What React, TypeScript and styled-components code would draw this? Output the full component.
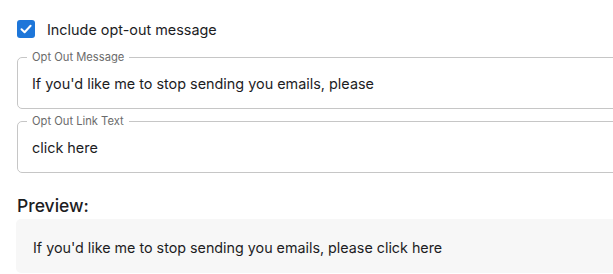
import React, { useState } from 'react';
import styled, { createGlobalStyle } from 'styled-components';

const GlobalStyle = createGlobalStyle`
    html, body {
        margin: 0;
        padding: 0;
        background: #fff;
        overflow: hidden;
    }
    body {
        font-family: Inter, "Helvetica Neue", Arial, sans-serif;
        color: #1d1d1f;
    }
`;

const Page = styled.div`
    width: 640px;
    padding: 20px 0 0 17px;
`;

const CheckRow = styled.label`
    display: flex;
    align-items: center;
    gap: 12px;
    height: 18px;
    font-size: 14.4px;
    cursor: pointer;
`;

const Box = styled.span<{ checked: boolean }>`
    width: 18px;
    height: 18px;
    border-radius: 3px;
    display: flex;
    align-items: center;
    justify-content: center;
    box-sizing: border-box;
    background: ${(p) => (p.checked ? '#1d76d9' : '#fff')};
    border: ${(p) => (p.checked ? 'none' : '2px solid #777')};
`;

const Field = styled.fieldset<{ gap: number }>`
    margin: ${(p) => p.gap}px 0 0 0;
    padding: 0 13px 4px 13px;
    border: 1px solid #c6c6c6;
    border-radius: 5px;
    min-width: 0;
`;

const Legend = styled.legend`
    font-size: 11.2px;
    line-height: 12px;
    color: #6b6b6b;
    padding: 0 5px;
    margin-left: -4px;
`;

const Input = styled.input`
    display: block;
    width: 100%;
    height: 41px;
    border: none;
    outline: none;
    padding: 0 0 0 1px;
    margin: 0;
    font-family: inherit;
    font-size: 14.4px;
    color: #1d1d1f;
    background: transparent;
`;

const Heading = styled.h3`
    margin: 23px 0 3px 0;
    font-size: 17.5px;
    line-height: 20px;
    font-weight: 500;
`;

const Preview = styled.div`
    margin-left: -1px;
    height: 54px;
    box-sizing: border-box;
    display: flex;
    align-items: center;
    padding: 3px 0 0 17px;
    background: #f7f7f7;
    border-radius: 5px;
    font-size: 14.3px;
`;

export default function App() {
    const [include, setInclude] = useState(true);
    const [message, setMessage] = useState("If you'd like me to stop sending you emails, please");
    const [link, setLink] = useState('click here');

    return (
        <Page>
            <GlobalStyle />
            <CheckRow onClick={() => setInclude(!include)}>
                <Box checked={include}>
                    {include && (
                        <svg width="14" height="14" viewBox="0 0 14 14">
                            <path d="M2.5 7.2 L5.6 10.2 L11.6 3.8" stroke="#fff" strokeWidth="2" fill="none" strokeLinecap="round" strokeLinejoin="round" />
                        </svg>
                    )}
                </Box>
                Include opt-out message
            </CheckRow>
            <Field gap={13}>
                <Legend>Opt Out Message</Legend>
                <Input value={message} onChange={(e) => setMessage(e.target.value)} />
            </Field>
            <Field gap={6}>
                <Legend>Opt Out Link Text</Legend>
                <Input value={link} onChange={(e) => setLink(e.target.value)} />
            </Field>
            <Heading>Preview:</Heading>
            <Preview>
                {message} {link}
            </Preview>
        </Page>
    );
}
